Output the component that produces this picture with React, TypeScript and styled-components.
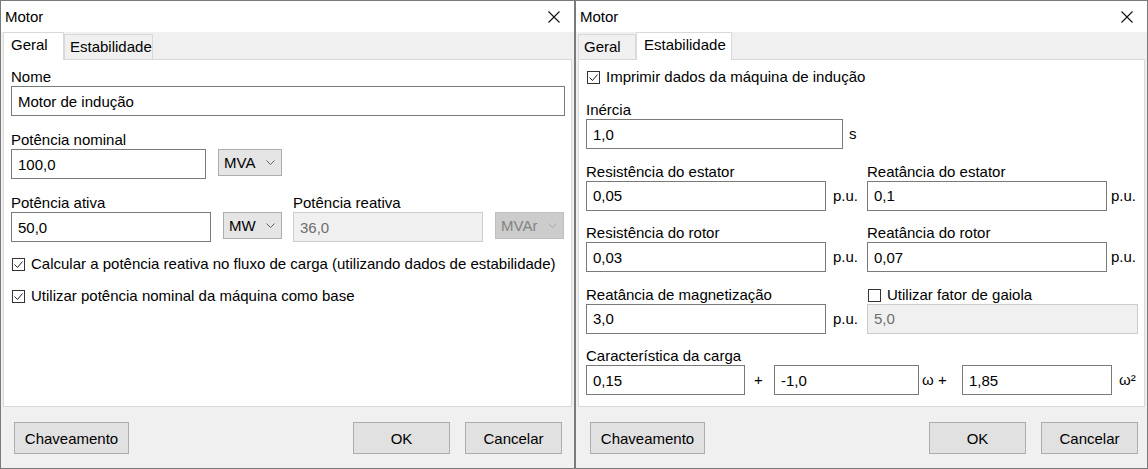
import React from "react";
import styled, { createGlobalStyle } from "styled-components";

const GlobalStyle = createGlobalStyle`
  html, body { margin: 0; padding: 0; background: #f0f0f0; }
  body {
    font-family: "Liberation Sans", Arial, sans-serif;
    font-size: 15px;
    color: #000;
  }
  * { box-sizing: border-box; }
`;

const Screen = styled.div`
  display: flex;
  width: 1148px;
  height: 469px;
  overflow: hidden;
`;

const Window = styled.div<{ $w: number }>`
  width: ${(p) => p.$w}px;
  height: 469px;
  flex: none;
  border: 1px solid #7a7a7a;
  background: #f0f0f0;
  display: flex;
  flex-direction: column;
`;

const TitleBar = styled.div`
  height: 31px;
  flex: none;
  background: #fff;
  display: flex;
  align-items: center;
  justify-content: space-between;
  padding: 0 14px 0 4px;
`;

const TitleText = styled.div`
  line-height: 18px;
`;

const CloseIcon = styled.svg`
  display: block;
`;

const TabStrip = styled.div`
  height: 27px;
  flex: none;
  display: flex;
  align-items: flex-end;
  padding-left: 2px;
  position: relative;
  z-index: 1;
`;

const Tab = styled.div<{ $w: number; $active?: boolean }>`
  width: ${(p) => p.$w}px;
  height: ${(p) => (p.$active ? 28 : 25)}px;
  margin-bottom: ${(p) => (p.$active ? -1 : 0)}px;
  border: 1px solid #d9d9d9;
  border-bottom: none;
  background: ${(p) => (p.$active ? "#fff" : "#f0f0f0")};
  padding: 3px 0 0 ${(p) => (p.$active ? 7 : 5)}px;
  line-height: 18px;
  white-space: nowrap;
`;

const Panel = styled.div<{ $top: number }>`
  flex: 1;
  margin: 0 2px;
  background: #fff;
  border: 1px solid #d9d9d9;
  padding: ${(p) => p.$top}px 6px 0 7px;
  display: flex;
  flex-direction: column;
`;

const Footer = styled.div<{ $left: number; $right: number }>`
  height: 61px;
  flex: none;
  display: flex;
  align-items: flex-start;
  padding: 15px ${(p) => p.$right}px 0 ${(p) => p.$left}px;
  gap: 15px;
`;

const Spacer = styled.div`
  flex: 1;
`;

const Button = styled.button<{ $w: number }>`
  width: ${(p) => p.$w}px;
  height: 32px;
  background: #e1e1e1;
  border: 1px solid #adadad;
  font: inherit;
  color: #000;
  padding: 0;
  cursor: default;
`;

const Stack = styled.div<{ $gap: number; $mt?: number }>`
  display: flex;
  flex-direction: column;
  gap: ${(p) => p.$gap}px;
  margin-top: ${(p) => p.$mt ?? 0}px;
`;

const Field = styled.div<{ $w?: number }>`
  display: flex;
  flex-direction: column;
  width: ${(p) => (p.$w ? `${p.$w}px` : "auto")};
  flex: none;
`;

const Label = styled.div`
  height: 20px;
  padding-top: 2px;
  line-height: 18px;
  white-space: nowrap;
`;

const Row = styled.div<{ $gap?: number }>`
  display: flex;
  align-items: flex-start;
  gap: ${(p) => p.$gap ?? 0}px;
`;

const InlineRow = styled.div`
  display: flex;
  align-items: center;
`;

const TextInput = styled.input<{ $w?: number }>`
  height: 30px;
  width: ${(p) => (p.$w ? `${p.$w}px` : "100%")};
  flex: ${(p) => (p.$w ? "none" : "1 1 auto")};
  min-width: 0;
  margin: 0;
  border: 1px solid #7a7a7a;
  background: #fff;
  padding: 0 6px;
  font: inherit;
  color: #000;
  outline: none;

  &:disabled {
    background: #f0f0f0;
    border-color: #cccccc;
    color: #6d6d6d;
  }
`;

const ComboBox = styled.div<{ $w: number; $disabled?: boolean }>`
  width: ${(p) => p.$w}px;
  height: 27px;
  flex: none;
  display: flex;
  align-items: center;
  justify-content: space-between;
  padding: 0 6px 0 5px;
  background: ${(p) => (p.$disabled ? "#cccccc" : "#e5e5e5")};
  border: 1px solid ${(p) => (p.$disabled ? "#bfbfbf" : "#adadad")};
  color: ${(p) => (p.$disabled ? "#838383" : "#000")};
  white-space: nowrap;
`;

const Unit = styled.div<{ $w?: number; $pl?: number }>`
  width: ${(p) => (p.$w ? `${p.$w}px` : "auto")};
  padding-left: ${(p) => p.$pl ?? 0}px;
  flex: none;
  white-space: nowrap;
  line-height: 18px;
`;

const CheckRow = styled.div<{ $mt?: number }>`
  display: flex;
  align-items: center;
  height: 20px;
  margin-top: ${(p) => p.$mt ?? 0}px;
`;

const CheckHeader = styled(CheckRow)`
  height: 20px;
  padding-top: 3px;
`;

const Box = styled.div`
  width: 13px;
  height: 13px;
  margin-left: 1px;
  flex: none;
  border: 1px solid #333;
  background: #fff;
  display: flex;
  align-items: center;
  justify-content: center;
`;

const CheckText = styled.span`
  margin-left: 6px;
  white-space: nowrap;
  line-height: 18px;
`;

const TwoCol = styled.div`
  display: flex;
  align-items: flex-start;
`;

const Col = styled.div<{ $w?: number }>`
  width: ${(p) => (p.$w ? `${p.$w}px` : "auto")};
  flex: ${(p) => (p.$w ? "none" : "1")};
  display: flex;
  flex-direction: column;
`;

const CheckMark = () => (
  <svg width="11" height="11" viewBox="0 0 11 11">
    <polyline points="1.5,5.5 4.5,8.5 9.5,2.5" fill="none" stroke="#222" strokeWidth="1" />
  </svg>
);

const Checkbox: React.FC<{ checked?: boolean; children: React.ReactNode; mt?: number; header?: boolean }> = ({
  checked,
  children,
  mt,
  header,
}) => {
  const Wrapper = header ? CheckHeader : CheckRow;
  return (
    <Wrapper $mt={mt}>
      <Box>{checked && <CheckMark />}</Box>
      <CheckText>{children}</CheckText>
    </Wrapper>
  );
};

const Combo: React.FC<{ w: number; disabled?: boolean; children: React.ReactNode }> = ({ w, disabled, children }) => (
  <ComboBox $w={w} $disabled={disabled}>
    <span>{children}</span>
    <svg width="9" height="5" viewBox="0 0 9 5">
      <path d="M0.5 0.5 L4.5 4.5 L8.5 0.5" fill="none" stroke={disabled ? "#a8a8a8" : "#606060"} strokeWidth="1" />
    </svg>
  </ComboBox>
);

const Close = () => (
  <CloseIcon width="12" height="12" viewBox="0 0 12 12">
    <path d="M0.5 0.5 L11.5 11.5 M11.5 0.5 L0.5 11.5" stroke="#111" strokeWidth="1.1" fill="none" />
  </CloseIcon>
);

const DialogTitle = () => (
  <TitleBar>
    <TitleText>Motor</TitleText>
    <Close />
  </TitleBar>
);

const DialogFooter: React.FC<{ left: number; right: number }> = ({ left, right }) => (
  <Footer $left={left} $right={right}>
    <Button $w={115}>Chaveamento</Button>
    <Spacer />
    <Button $w={97}>OK</Button>
    <Button $w={97}>Cancelar</Button>
  </Footer>
);

const GeneralDialog = () => (
  <Window $w={575}>
    <DialogTitle />
    <TabStrip>
      <Tab $w={61} $active>
        Geral
      </Tab>
      <Tab $w={89}>Estabilidade</Tab>
    </TabStrip>
    <Panel $top={6}>
      <Stack $gap={13}>
        <Field>
          <Label>Nome</Label>
          <TextInput readOnly value="Motor de indução" />
        </Field>
        <Field $w={271}>
          <Label>Potência nominal</Label>
          <Row $gap={12}>
            <TextInput readOnly value="100,0" />
            <Combo w={64}>MVA</Combo>
          </Row>
        </Field>
        <Row $gap={11}>
          <Field $w={271}>
            <Label>Potência ativa</Label>
            <Row $gap={12}>
              <TextInput readOnly value="50,0" />
              <Combo w={59}>MW</Combo>
            </Row>
          </Field>
          <Field $w={271}>
            <Label>Potência reativa</Label>
            <Row $gap={12}>
              <TextInput disabled readOnly value="36,0" />
              <Combo w={69} disabled>
                MVAr
              </Combo>
            </Row>
          </Field>
        </Row>
      </Stack>
      <Stack $gap={12} $mt={12}>
        <Checkbox checked>Calcular a potência reativa no fluxo de carga (utilizando dados de estabilidade)</Checkbox>
        <Checkbox checked>Utilizar potência nominal da máquina como base</Checkbox>
      </Stack>
    </Panel>
    <DialogFooter left={13} right={12} />
  </Window>
);

const UnitField: React.FC<{ label: React.ReactNode; value: string; gap: number }> = ({ label, value, gap }) => (
  <Field>
    <Label>{label}</Label>
    <InlineRow>
      <TextInput $w={240} readOnly value={value} />
      <Unit $pl={gap}>p.u.</Unit>
    </InlineRow>
  </Field>
);

const StabilityDialog = () => (
  <Window $w={573}>
    <DialogTitle />
    <TabStrip>
      <Tab $w={58}>Geral</Tab>
      <Tab $w={96} $active>
        Estabilidade
      </Tab>
    </TabStrip>
    <Panel $top={7}>
      <Checkbox checked>Imprimir dados da máquina de indução</Checkbox>
      <Stack $gap={11.5} $mt={12}>
        <Field>
          <Label>Inércia</Label>
          <InlineRow>
            <TextInput $w={257} readOnly value="1,0" />
            <Unit $pl={6}>s</Unit>
          </InlineRow>
        </Field>
        <TwoCol>
          <Col $w={281}>
            <UnitField label="Resistência do estator" value="0,05" gap={7} />
          </Col>
          <Col>
            <UnitField label="Reatância do estator" value="0,1" gap={4} />
          </Col>
        </TwoCol>
        <TwoCol>
          <Col $w={281}>
            <UnitField label="Resistência do rotor" value="0,03" gap={7} />
          </Col>
          <Col>
            <UnitField label="Reatância do rotor" value="0,07" gap={4} />
          </Col>
        </TwoCol>
        <TwoCol>
          <Col $w={281}>
            <UnitField label="Reatância de magnetização" value="3,0" gap={7} />
          </Col>
          <Col>
            <Field>
              <Checkbox header>Utilizar fator de gaiola</Checkbox>
              <TextInput disabled readOnly value="5,0" />
            </Field>
          </Col>
        </TwoCol>
        <Field>
          <Label>Característica da carga</Label>
          <InlineRow>
            <TextInput $w={159} readOnly value="0,15" />
            <Unit $w={29} $pl={9}>
              +
            </Unit>
            <TextInput $w={145} readOnly value="-1,0" />
            <Unit $w={43} $pl={3}>
              ω +
            </Unit>
            <TextInput $w={150} readOnly value="1,85" />
            <Unit $pl={7}>ω²</Unit>
          </InlineRow>
        </Field>
      </Stack>
    </Panel>
    <DialogFooter left={14} right={9} />
  </Window>
);

export default function App() {
  return (
    <>
      <GlobalStyle />
      <Screen>
        <GeneralDialog />
        <StabilityDialog />
      </Screen>
    </>
  );
}
